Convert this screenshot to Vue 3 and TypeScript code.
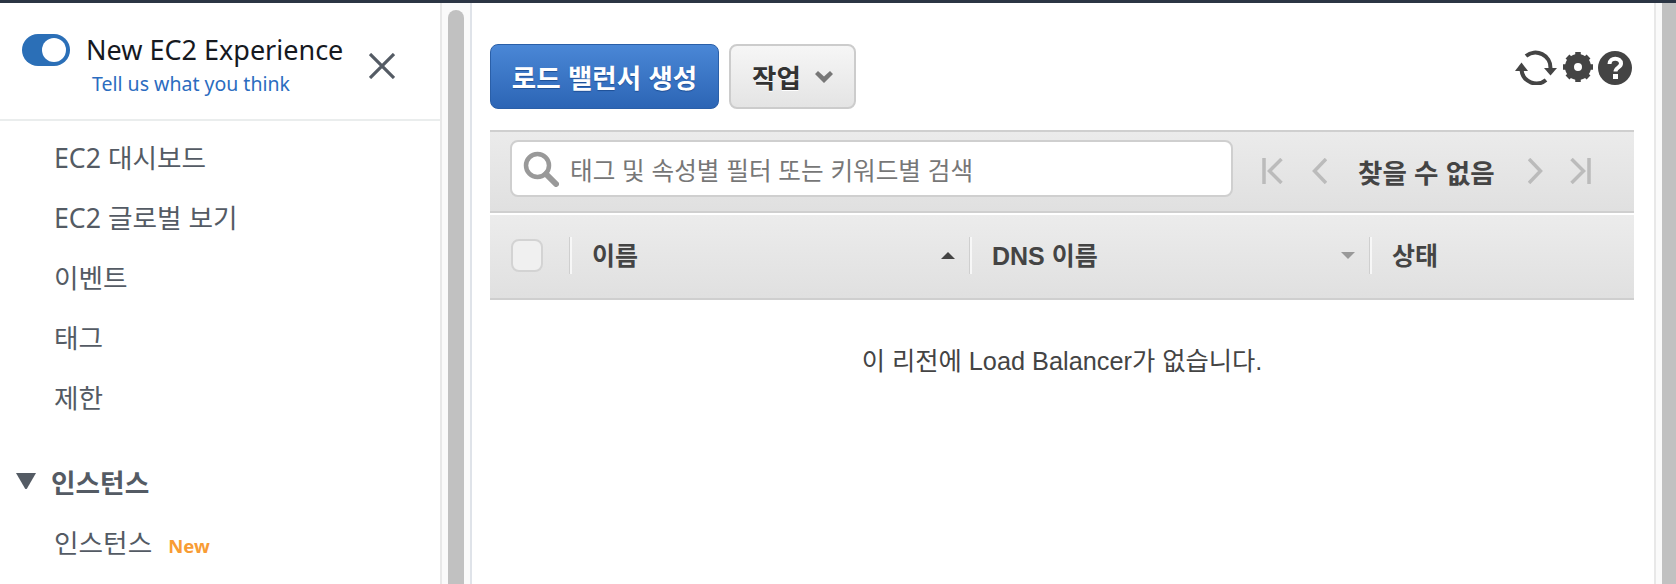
<script setup lang="ts">
const navItems = ['EC2 대시보드', 'EC2 글로벌 보기', '이벤트', '태그', '제한'];
</script>

<template>
  <div class="page">
    <div class="top-line"></div>
    <div class="frame">
      <aside class="sidebar">
        <div class="experience">
          <div class="toggle-row">
            <span class="toggle"><span class="knob"></span></span>
            <div class="toggle-text">
              <div class="toggle-title">New EC2 Experience</div>
              <a class="feedback">Tell us what you think</a>
            </div>
            <svg class="close" viewBox="0 0 26 26" fill="none" stroke="#545b64" stroke-width="3.2">
              <path d="M1 1l24 24M25 1L1 25" />
            </svg>
          </div>
        </div>
        <nav class="nav">
          <a v-for="item in navItems" :key="item" class="nav-item">{{ item }}</a>
          <div class="nav-section">
            <svg class="caret" viewBox="0 0 20 16"><path d="M0 0h20L11 15.500Q10 16.500 9 15.500z" fill="#545b64" /></svg>
            <span>인스턴스</span>
          </div>
          <a class="nav-item last-item">인스턴스<span class="new">New</span></a>
        </nav>
      </aside>

      <div class="scroll-track left-track"><div class="thumb left-thumb"></div></div>

      <main class="main">
        <div class="actions">
          <button class="btn primary">로드 밸런서 생성</button>
          <button class="btn secondary">
            작업
            <svg class="chevron" viewBox="0 0 18 12"><path d="M0 3l3-3 6 5.500L15 0l3 3-9 9z" fill="#777" /></svg>
          </button>
          <div class="tools">
            <svg class="refresh" viewBox="0 0 42 35" fill="none">
              <path d="M11 6A15 15 0 0 1 35.500 18" stroke="#444" stroke-width="4" />
              <path d="M29 18h13l-6.500 7.500z" fill="#444" />
              <path d="M6.500 20A15 15 0 0 0 31 30" stroke="#444" stroke-width="4" />
              <path d="M0 21h13l-6.500-8.500z" fill="#444" />
            </svg>
            <svg class="gear" viewBox="0 0 34 32">
              <circle cx="17" cy="16" r="8.500" fill="none" stroke="#444" stroke-width="9" />
              <path d="M17 1v5M17 26v5M2 16h5M27 16h5M6.500 5.500l4 4M23.500 22.500l4 4M6.500 26.500l4-4M23.500 9.500l4-4" stroke="#444" stroke-width="5.500" />
            </svg>
            <svg class="help" viewBox="0 0 34 34">
              <circle cx="17" cy="17" r="17" fill="#444" />
              <path d="M11.500 13c0-7 11.500-7 11.500-.5 0 4-5.500 4-5.500 8" fill="none" stroke="#fff" stroke-width="4" />
              <rect x="15" y="23" width="5" height="5" fill="#fff" />
            </svg>
          </div>
        </div>

        <div class="filter-bar">
          <div class="search">
            <svg class="search-icon" viewBox="0 0 36 36" fill="none" stroke="#999">
              <circle cx="14.500" cy="14.500" r="11.500" stroke-width="4.500" />
              <path d="M23 23l10 10" stroke-width="6" stroke-linecap="round" />
            </svg>
            <span class="placeholder">태그 및 속성별 필터 또는 키워드별 검색</span>
          </div>
          <div class="pager">
            <svg class="pg first" viewBox="0 0 21 26" fill="none" stroke="#bbb" stroke-width="3.500"><path d="M2 0v26M19.500 1L7.500 13l12 12" /></svg>
            <svg class="pg prev" viewBox="0 0 15 26" fill="none" stroke="#bbb" stroke-width="3.500"><path d="M14 1L2.500 13 14 25" /></svg>
            <span class="pager-text">찾을 수 없음</span>
            <svg class="pg next" viewBox="0 0 15 26" fill="none" stroke="#bbb" stroke-width="3.500"><path d="M1 1l11.500 12L1 25" /></svg>
            <svg class="pg last" viewBox="0 0 21 26" fill="none" stroke="#bbb" stroke-width="3.500"><path d="M19 0v26M1.500 1l12 12-12 12" /></svg>
          </div>
        </div>

        <div class="table-head">
          <div class="cell check-cell"><span class="checkbox"></span></div>
          <div class="cell name-cell">
            <span class="label">이름</span>
            <span class="sort up"></span>
          </div>
          <div class="cell dns-cell">
            <span class="label">DNS 이름</span>
            <span class="sort down"></span>
          </div>
          <div class="cell state-cell"><span class="label">상태</span></div>
        </div>

        <p class="empty">이 리전에 Load Balancer가 없습니다.</p>
      </main>

      <div class="scroll-track right-track"><div class="thumb right-thumb"></div></div>
    </div>
  </div>
</template>

<style scoped>
.page {
  width: 1676px;
  height: 584px;
  overflow: hidden;
  background: #fff;
  font-family: "Liberation Sans", "Noto Sans CJK KR", sans-serif;
}

.top-line {
  height: 3px;
  background: #2b3544;
}

.frame {
  display: flex;
  height: 581px;
}

.sidebar {
  width: 440px;
  flex: none;
  font-family: "Noto Sans", "Noto Sans CJK KR", sans-serif;
}

.experience {
  height: 116px;
  border-bottom: 2px solid #eaeded;
}

.toggle-row {
  display: flex;
  align-items: flex-start;
  padding: 31px 0 0 22px;
}

.toggle {
  width: 48px;
  height: 32px;
  border-radius: 16px;
  background: #2b6fb7;
  display: flex;
  align-items: center;
  justify-content: flex-end;
  padding-right: 4px;
  box-sizing: border-box;
  flex: none;
}

.knob {
  width: 24px;
  height: 24px;
  border-radius: 50%;
  background: #fff;
}

.toggle-text {
  margin-left: 16px;
  width: 282px;
  flex: none;
}

.toggle-title {
  font-size: 27px;
  line-height: 32px;
  color: #16191f;
  white-space: nowrap;
}

.feedback {
  display: block;
  margin: 5px 0 0 6px;
  font-size: 19.500px;
  line-height: 26px;
  color: #2b6cc0;
  white-space: nowrap;
}

.close {
  width: 26px;
  height: 26px;
  margin: 19px 0 0 1px;
  flex: none;
}

.nav {
  display: flex;
  flex-direction: column;
  padding-top: 7px;
}

.nav-item {
  height: 60px;
  line-height: 60px;
  padding-left: 54px;
  font-size: 26.700px;
  color: #545b64;
  white-space: nowrap;
}

.nav-section {
  display: flex;
  align-items: center;
  height: 60px;
  margin-top: 23px;
  padding-left: 16px;
  font-size: 26.700px;
  font-weight: 700;
  color: #545b64;
}

.last-item {
  margin-top: 2px;
}

.caret {
  width: 20px;
  height: 16px;
  margin-right: 15px;
}

.new {
  margin-left: 16px;
  font-size: 18.500px;
  font-weight: 700;
  color: #f89c35;
}

.scroll-track {
  flex: none;
  display: flex;
  background: #fafafa;
}

.left-track {
  width: 32px;
  border-left: 2px solid #e8e8e8;
  border-right: 2px solid #dfe3e9;
  padding-left: 6px;
  box-sizing: border-box;
}

.right-track {
  width: 22px;
  border-left: 2px solid #e8e8e8;
  padding-left: 6px;
  box-sizing: border-box;
}

.thumb {
  width: 16px;
  background: #c1c1c1;
}

.left-thumb {
  margin-top: 7px;
  border-radius: 8px 8px 0 0;
}

.right-thumb {
  width: 14px;
}

.main {
  flex: 1;
  min-width: 0;
  padding-left: 18px;
  padding-right: 20px;
  color: #444;
}

.actions {
  display: flex;
  align-items: flex-start;
  padding-top: 41px;
  height: 127px;
  box-sizing: border-box;
}

.btn {
  height: 65px;
  border-radius: 8px;
  font-family: "Liberation Sans", "Noto Sans CJK KR", sans-serif;
  font-size: 26.500px;
  font-weight: 700;
  display: flex;
  align-items: center;
  justify-content: center;
  box-sizing: border-box;
}

.primary {
  width: 229px;
  color: #fff;
  background: linear-gradient(#4a87d6, #2c65b5);
  border: 1px solid #2a5fa8;
  text-shadow: 0 1px 1px #1f4f95;
}

.secondary {
  width: 127px;
  margin-left: 10px;
  color: #333;
  background: linear-gradient(#f6f6f6, #e4e4e4);
  border: 2px solid #cccccc;
  text-shadow: 0 1px 0 #fff;
}

.chevron {
  width: 18px;
  height: 12px;
  margin-left: 14px;
}

.tools {
  margin-left: auto;
  margin-right: 2px;
  margin-top: 6px;
  display: flex;
  align-items: flex-start;
}

.refresh {
  width: 42px;
  height: 35px;
}

.gear {
  width: 34px;
  height: 32px;
  margin: 1px 0 0 4px;
}

.help {
  width: 34px;
  height: 34px;
  margin: 1px 0 0 3px;
}

.filter-bar {
  height: 83px;
  box-sizing: border-box;
  border-top: 2px solid #cfcfcf;
  border-bottom: 2px solid #cfcfcf;
  background: linear-gradient(#ebebeb, #e0e0e0);
  display: flex;
  align-items: flex-start;
  padding: 8px 0 0 20px;
}

.search {
  width: 723px;
  height: 57px;
  box-sizing: border-box;
  flex: none;
  background: #fff;
  border: 2px solid #cfcfcf;
  border-radius: 8px;
  display: flex;
  align-items: center;
  padding-left: 11px;
}

.search-icon {
  width: 36px;
  height: 36px;
  flex: none;
}

.placeholder {
  margin-left: 11px;
  font-size: 24.600px;
  color: #777;
  white-space: nowrap;
}

.pager {
  display: flex;
  align-items: center;
  height: 57px;
  padding-top: 5px;
  box-sizing: border-box;
  margin-left: 29px;
}

.pg {
  height: 26px;
  flex: none;
}

.first, .last {
  width: 21px;
}

.prev, .next {
  width: 15px;
}

.prev {
  margin-left: 29px;
}

.pager-text {
  width: 136px;
  margin: 0 34px 0 31px;
  font-size: 26.500px;
  font-weight: 700;
  color: #444;
  white-space: nowrap;
}

.last {
  margin-left: 27px;
}

.table-head {
  margin-top: 2px;
  height: 85px;
  box-sizing: border-box;
  border-bottom: 2px solid #cfcfcf;
  background: linear-gradient(#ececec, #e0e0e0);
  display: grid;
  grid-template-columns: 80px 400px 400px 1fr;
  align-items: center;
  font-size: 25px;
  font-weight: 700;
  color: #444;
}

.cell {
  height: 37px;
  display: flex;
  align-items: center;
  justify-content: space-between;
  box-sizing: border-box;
  margin-top: -3px;
}

.label {
  margin-bottom: 3px;
}

.check-cell {
  padding-left: 21px;
  justify-content: flex-start;
}

.name-cell, .dns-cell, .state-cell {
  border-left: 2px solid #f7f7f7;
  box-shadow: -1px 0 0 #cfcfcf;
  padding: 0 15px 0 20px;
}

.checkbox {
  width: 32px;
  height: 33px;
  box-sizing: border-box;
  background: #f0f0f0;
  border: 2px solid #d3d3d3;
  border-radius: 8px;
}

.sort {
  width: 0;
  height: 0;
  border-left: 7px solid transparent;
  border-right: 7px solid transparent;
}

.up {
  border-bottom: 7px solid #444;
}

.down {
  border-top: 7px solid #999;
}

.empty {
  margin: 46px 0 0;
  text-align: center;
  font-size: 25.300px;
  line-height: 30px;
  color: #444;
}
</style>

<style>
html,
body {
  margin: 0;
  background: #fff;
}
</style>
